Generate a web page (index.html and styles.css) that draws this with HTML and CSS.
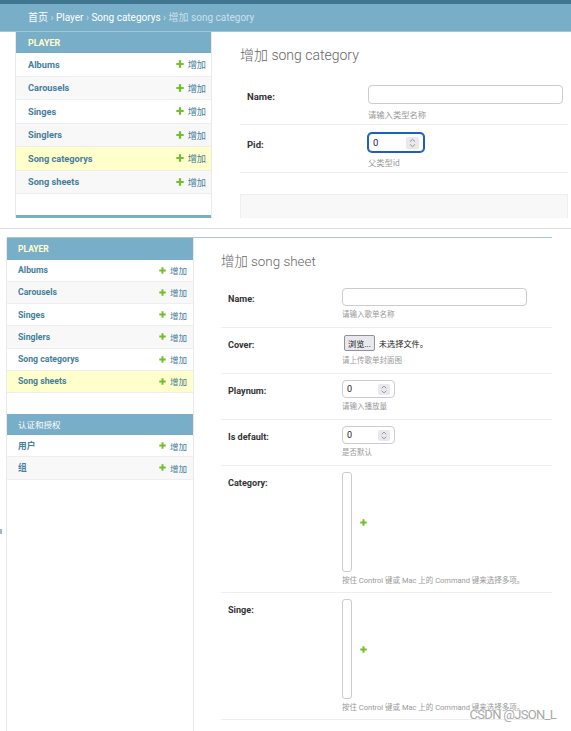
FILE: index.html
```html
<!DOCTYPE html>
<html lang="zh">
<head>
<meta charset="utf-8">
<title>增加 song category</title>
<link rel="stylesheet" href="styles.css">
</head>
<body>
<svg class="defs" width="0" height="0" aria-hidden="true">
  <symbol id="plus" viewBox="0 0 10 10"><path fill="#70bf2b" d="M3.6 0.4h2.8v3.2h3.2v2.8H6.4v3.2H3.6V6.4H0.4V3.6h3.2z"/></symbol>
  <symbol id="spin" viewBox="0 0 12 12"><path d="M3.5 4.6 6 2.3 8.5 4.6M3.5 7.4 6 9.7 8.5 7.4" fill="none" stroke="#8a8a8e" stroke-width="0.9"/></symbol>
</svg>

<section class="shot s1">
  <div class="topbar"></div>
  <div class="crumbs"><a>首页</a> › <a>Player</a> › <a>Song categorys</a> › <span class="cur">增加 song category</span></div>
  <div class="layout">
    <div class="toggle"></div>
    <nav class="sidebar">
      <div class="module">
        <div class="caption current">Player</div>
        <div class="nav-row"><a class="model">Albums</a><a class="add"><svg><use href="#plus"/></svg>增加</a></div>
        <div class="nav-row"><a class="model">Carousels</a><a class="add"><svg><use href="#plus"/></svg>增加</a></div>
        <div class="nav-row"><a class="model">Singes</a><a class="add"><svg><use href="#plus"/></svg>增加</a></div>
        <div class="nav-row"><a class="model">Singlers</a><a class="add"><svg><use href="#plus"/></svg>增加</a></div>
        <div class="nav-row current"><a class="model">Song categorys</a><a class="add"><svg><use href="#plus"/></svg>增加</a></div>
        <div class="nav-row"><a class="model">Song sheets</a><a class="add"><svg><use href="#plus"/></svg>增加</a></div>
      </div>
      <div class="module">
        <div class="caption peek"></div>
      </div>
    </nav>
    <main class="content">
      <h1 class="title">增加 song category</h1>
      <div class="form-row">
        <div class="label">Name:</div>
        <div class="field">
          <div class="text-input"></div>
          <div class="help">请输入类型名称</div>
        </div>
      </div>
      <div class="form-row">
        <div class="label">Pid:</div>
        <div class="field">
          <div class="num-input focus"><span>0</span><span class="spin"><svg><use href="#spin"/></svg></span></div>
          <div class="help">父类型id</div>
        </div>
      </div>
      <div class="submit-row"></div>
    </main>
  </div>
</section>

<section class="shot s2">
  <div class="s2-gap"></div>
  <div class="s2-line"></div>
  <div class="layout">
    <div class="toggle"><span class="toggle-mark"></span></div>
    <nav class="sidebar">
      <div class="module">
        <div class="caption current">Player</div>
        <div class="nav-row"><a class="model">Albums</a><a class="add"><svg><use href="#plus"/></svg>增加</a></div>
        <div class="nav-row"><a class="model">Carousels</a><a class="add"><svg><use href="#plus"/></svg>增加</a></div>
        <div class="nav-row"><a class="model">Singes</a><a class="add"><svg><use href="#plus"/></svg>增加</a></div>
        <div class="nav-row"><a class="model">Singlers</a><a class="add"><svg><use href="#plus"/></svg>增加</a></div>
        <div class="nav-row"><a class="model">Song categorys</a><a class="add"><svg><use href="#plus"/></svg>增加</a></div>
        <div class="nav-row current"><a class="model">Song sheets</a><a class="add"><svg><use href="#plus"/></svg>增加</a></div>
      </div>
      <div class="module">
        <div class="caption cjk">认证和授权</div>
        <div class="nav-row"><a class="model">用户</a><a class="add"><svg><use href="#plus"/></svg>增加</a></div>
        <div class="nav-row"><a class="model">组</a><a class="add"><svg><use href="#plus"/></svg>增加</a></div>
      </div>
    </nav>
    <main class="content">
      <h1 class="title">增加 song sheet</h1>
      <div class="form-row">
        <div class="label">Name:</div>
        <div class="field">
          <div class="text-input"></div>
          <div class="help">请输入歌单名称</div>
        </div>
      </div>
      <div class="form-row">
        <div class="label">Cover:</div>
        <div class="field">
          <div class="file-field"><span class="file-btn">浏览...</span><span>未选择文件。</span></div>
          <div class="help">请上传歌单封面图</div>
        </div>
      </div>
      <div class="form-row">
        <div class="label">Playnum:</div>
        <div class="field">
          <div class="num-input"><span>0</span><span class="spin"><svg><use href="#spin"/></svg></span></div>
          <div class="help">请输入播放量</div>
        </div>
      </div>
      <div class="form-row">
        <div class="label">Is default:</div>
        <div class="field">
          <div class="num-input"><span>0</span><span class="spin"><svg><use href="#spin"/></svg></span></div>
          <div class="help">是否默认</div>
        </div>
      </div>
      <div class="form-row tall">
        <div class="label">Category:</div>
        <div class="field">
          <div class="multi"><div class="select"></div><svg><use href="#plus"/></svg></div>
          <div class="help">按住 Control 键或 Mac 上的 Command 键来选择多项。</div>
        </div>
      </div>
      <div class="form-row tall">
        <div class="label">Singe:</div>
        <div class="field">
          <div class="multi"><div class="select"></div><svg><use href="#plus"/></svg></div>
          <div class="help">按住 Control 键或 Mac 上的 Command 键来选择多项。</div>
        </div>
      </div>
    </main>
  </div>
</section>

<div class="watermark">CSDN @JSON_L</div>
</body>
</html>
```

FILE: styles.css
```css
* { box-sizing: border-box; }
html, body { margin: 0; padding: 0; background: #fff; }
body {
  width: 571px;
  height: 731px;
  overflow: hidden;
  position: relative;
  font-family: Roboto, "Noto Sans CJK SC", sans-serif;
  color: #333;
}
.defs { position: absolute; width: 0; height: 0; }
a { text-decoration: none; color: #447e9b; }

.shot { overflow: hidden; display: flex; flex-direction: column; }
.s1 { height: 218px; }

.topbar { flex: none; height: 4px; background: #417690; }
.crumbs {
  flex: none;
  height: 28px;
  line-height: 27px;
  padding-left: 28px;
  background: #79aec8;
  border-bottom: 1px solid rgba(255, 255, 255, 0.3);
  font-size: 10px;
  color: #c4dce8;
  white-space: nowrap;
}
.crumbs a { color: #fff; }
.crumbs .cur { color: #c9e0ea; }

.layout { display: flex; flex: 1; min-height: 0; }
.toggle { flex: none; border-right: 1px solid #eaeaea; }
.sidebar { flex: none; border-right: 1px solid #eaeaea; }

.caption {
  display: flex;
  align-items: center;
  background: #79aec8;
  color: #fff;
  text-transform: uppercase;
  font-weight: 700;
  white-space: nowrap;
}
.caption.current { color: #ffc; }
.caption.cjk { font-weight: 400; }

.nav-row {
  display: flex;
  align-items: center;
  justify-content: space-between;
  border-bottom: 1px solid #eee;
  background: #fff;
  white-space: nowrap;
}
.nav-row:nth-child(odd) { background: #f8f8f8; }
.nav-row.current { background: #ffc; }
.model { font-weight: 700; }
.add { display: flex; align-items: center; }
.add svg { flex: none; }

.content { flex: 1; min-width: 0; }
.title { margin: 0; font-weight: 300; color: #666; white-space: nowrap; }
.form-row { display: flex; border-bottom: 1px solid #eee; }
.label { flex: none; font-weight: 700; color: #333; white-space: nowrap; }
.field { display: flex; flex-direction: column; align-items: flex-start; }
.help { color: #999; white-space: nowrap; }

.text-input { border: 1px solid #ccc; border-radius: 4px; background: #fff; }
.num-input {
  display: flex;
  align-items: center;
  justify-content: space-between;
  border: 1px solid #ccc;
  border-radius: 4px;
  background: #fff;
  color: #222;
}
.num-input.focus { border-color: #1b5fc0; box-shadow: 0 0 0 1px #1b5fc0; }
.spin { display: flex; background: #e9e9ed; border-radius: 2px; }
.spin svg { width: 100%; height: 100%; }
.submit-row { background: #f8f8f8; border: 1px solid #eee; }

/* ---------- first screenshot ---------- */
.s1 .toggle { width: 16px; }
.s1 .sidebar { width: 196px; }
.s1 .module + .module { margin-top: 21px; }
.s1 .caption { height: 21px; padding-left: 12px; font-size: 8.9px; }
.s1 .nav-row { height: 23.5px; padding: 0 5px 0 12px; font-size: 9.2px; }
.s1 .add { gap: 4px; }
.s1 .add svg { width: 8px; height: 8px; }
.s1 .content { padding: 14px 3px 0 28px; }
.s1 .title { font-size: 14px; line-height: 18px; margin-bottom: 13px; }
.s1 .form-row { padding: 8px 7px 3px; }
.s1 .label { width: 121px; font-size: 9.5px; line-height: 19px; padding-top: 2px; }
.s1 .text-input { width: 195px; height: 19px; }
.s1 .num-input { width: 56px; height: 19px; padding: 0 4px 0 4px; font-size: 9.5px; }
.s1 .spin { width: 13px; height: 12px; }
.s1 .help { font-size: 8.3px; line-height: 12px; margin-top: 5px; }
.s1 .submit-row { margin-top: 21px; height: 40px; }

/* ---------- second screenshot ---------- */
.s2 { height: 503px; margin-top: 10px; border-top: 1px solid #ddd; }
.s2-gap { flex: none; height: 8px; }
.s2-line { flex: none; height: 1px; margin: 0 19px 0 7px; background: #a9c6d2; }
.s2 .toggle { width: 7px; padding-top: 291px; }
.toggle-mark {
  display: block;
  width: 2px;
  height: 5px;
  border-left: 1px solid #6fa0bd;
  border-right: 1px solid #6fa0bd;
  opacity: 0.7;
}
.s2 .sidebar { width: 187px; }
.s2 .module + .module { margin-top: 20.5px; }
.s2 .caption { height: 21.5px; padding-left: 11px; font-size: 8.5px; }
.s2 .nav-row { height: 22.25px; padding: 0 6px 0 11px; font-size: 8.7px; }
.s2 .add { gap: 4px; font-size: 8.5px; }
.s2 .add svg { width: 7px; height: 7px; }
.s2 .content { padding: 14.5px 19px 0 27px; }
.s2 .title { font-size: 13.4px; line-height: 17px; margin-bottom: 12.5px; }
.s2 .form-row { padding: 6px 7px 7px; }
.s2 .form-row.tall { padding-bottom: 6px; }
.s2 .label { width: 114px; font-size: 9.1px; line-height: 18px; padding-top: 2px; }
.s2 .text-input { width: 185px; height: 18px; }
.s2 .num-input { width: 53px; height: 18px; padding: 0 4px 0 4px; font-size: 9px; }
.s2 .spin { width: 12px; height: 11px; }
.s2 .help { font-size: 7.5px; line-height: 11px; margin-top: 3px; }

.file-field { display: flex; align-items: center; gap: 4px; height: 18px; font-size: 8.2px; color: #222; }
.file-btn {
  display: flex;
  align-items: center;
  height: 16px;
  padding: 0 3px;
  margin-left: 2px;
  border: 1px solid #8f8f9d;
  border-radius: 2px;
  background: #e9e9ed;
  color: #111;
}
.multi { display: flex; align-items: center; gap: 8px; }
.select { width: 10px; height: 100px; border: 1px solid #ccc; border-radius: 3px; background: #fff; }
.multi svg { width: 7px; height: 7px; }

.watermark {
  position: absolute;
  right: 15px;
  top: 707px;
  font-size: 13px;
  letter-spacing: -0.7px;
  color: #a8a8a8;
  text-shadow: 0 0 1px #fff, 0 0 1px #fff;
  white-space: nowrap;
}
```
